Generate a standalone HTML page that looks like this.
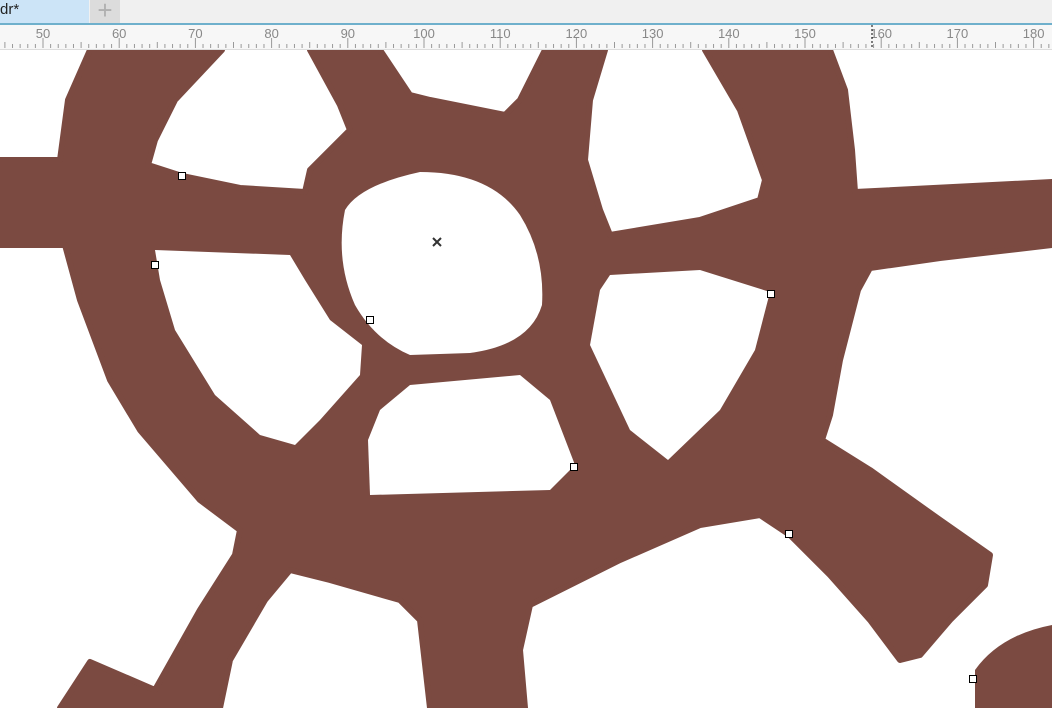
<!DOCTYPE html>
<html><head><style>
body{margin:0;width:1052px;height:708px;overflow:hidden;background:#fff;font-family:"Liberation Sans",sans-serif;position:relative}
#tabs{position:absolute;left:0;top:0;width:1052px;height:23px;background:#f0f0f0}
#tab{position:absolute;left:0;top:0;width:89px;height:23px;background:#cce4f7;font-size:15px;line-height:20px;color:#222}
#plus{position:absolute;left:90px;top:0;width:30px;height:23px;background:#dcdcdc;color:#b0b0b0;font-size:26px;line-height:20px;text-align:center}
#line{position:absolute;left:0;top:23px;width:1052px;height:2px;background:#6fb0cc}
#ruler{position:absolute;left:0;top:25px;width:1052px;height:24px;background:#f7f7f7;border-bottom:1px solid #ddd;z-index:2}
svg{position:absolute;left:0;top:0}
</style></head><body>
<div id="tabs"><div id="tab">dr*</div><div id="plus">+</div></div>
<div id="line"></div>
<div id="ruler">
<svg width="1052" height="24" id="rs"></svg>
</div>
<svg width="1052" height="708" style="top:0">
<defs><clipPath id="c"><rect x="0" y="50" width="1052" height="658"/></clipPath></defs>
<g clip-path="url(#c)">
<path fill="#7b4a41" stroke="#7b4a41" stroke-width="6" stroke-linejoin="round" d="M0,160 L60,160 L68,100 L90,50 L222,50 L175,100 L155,140 L148,165 L182,176 L240,188 L305,192 L310,170 L350,130 L340,105 L310,50 L380,50 L410,95 L430,100 L505,115 L520,100 L545,50 L605,50 L590,100 L585,160 L600,210 L610,235 L700,220 L760,200 L765,180 L740,110 L705,50 L830,50 L845,90 L852,150 L855,192 L1052,182 L1052,245 L940,258 L870,268 L858,290 L840,360 L830,415 L822,440 L870,470 L940,520 L990,555 L985,585 L950,620 L920,655 L900,660 L870,620 L830,575 L790,535 L760,515 L700,525 L620,560 L530,605 L520,650 L525,708 L430,708 L420,620 L400,600 L330,580 L290,570 L265,600 L230,660 L220,708 L60,708 L90,662 L155,690 L200,610 L235,555 L240,530 L200,500 L140,430 L110,380 L80,300 L65,245 L0,245 Z"/>
<path fill="#fff" d="M345,210 Q360,185 420,172 Q490,172 520,215 Q545,255 542,305 Q530,345 470,353 L410,355 Q375,340 355,305 Q335,260 345,210 Z"/>
<path fill="#fff" d="M155,250 L290,255 L305,280 L330,320 L362,345 L360,375 L320,420 L295,445 L260,435 L215,395 L175,330 L160,280 Z"/>
<path fill="#fff" d="M410,385 L520,375 L550,400 L575,465 L550,490 L370,495 L368,440 L380,410 Z"/>
<path fill="#fff" d="M610,275 L700,270 L770,292 L755,350 L720,410 L668,460 L630,430 L590,345 L600,290 Z"/>
<path fill="#7b4a41" d="M975,670 Q1000,635 1052,625 L1052,708 L975,708 Z"/>
</g>
<path d="M433,238 L441,246 M441,238 L433,246" stroke="#333" stroke-width="2"/>
<g fill="#fff" stroke="#000" stroke-width="1">
<rect x="178.5" y="172.5" width="7" height="7"/><rect x="151.5" y="261.5" width="7" height="7"/>
<rect x="366.5" y="316.5" width="7" height="7"/><rect x="570.5" y="463.5" width="7" height="7"/>
<rect x="767.5" y="290.5" width="7" height="7"/><rect x="785.5" y="530.5" width="7" height="7"/>
<rect x="969.5" y="675.5" width="7" height="7"/>
</g>
</svg>
<script>
var s=document.getElementById('rs'),h='';
for(var u=45;u<=185;u++){var x=43+(u-50)*7.62;var big=u%10==0,mid=u%5==0;
h+='<line x1="'+x+'" x2="'+x+'" y1="'+(big?13:(mid?17:19))+'" y2="23" stroke="#999" stroke-width="1"/>';
if(big)h+='<text x="'+x+'" y="13" font-size="13" fill="#888" text-anchor="middle" font-family="Liberation Sans">'+u+'</text>';}
h+='<line x1="872" x2="872" y1="0" y2="24" stroke="#000" stroke-dasharray="2,2"/>';
s.innerHTML=h;
</script>
</body></html>
